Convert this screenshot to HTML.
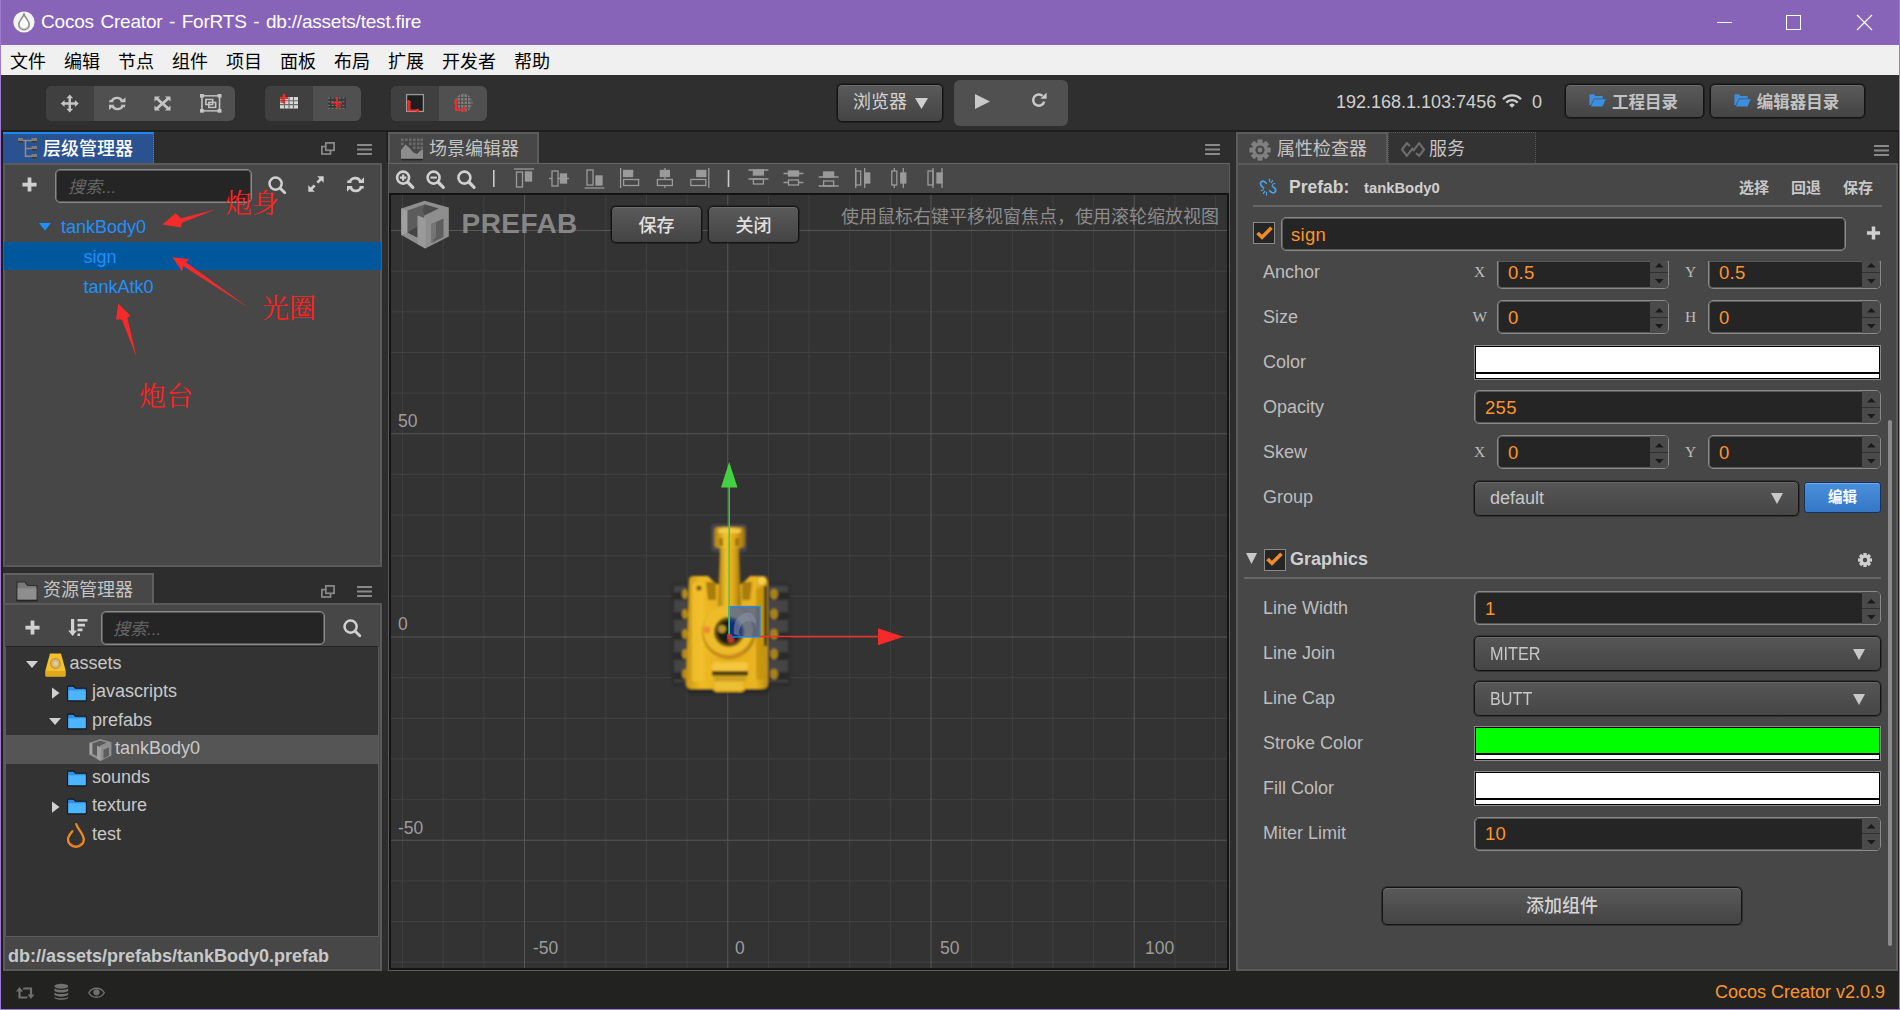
<!DOCTYPE html>
<html lang="zh-CN">
<head>
<meta charset="utf-8">
<title>Cocos Creator - ForRTS - db://assets/test.fire</title>
<style>
*{box-sizing:border-box;margin:0;padding:0}
html,body{width:1900px;height:1010px;overflow:hidden;background:#2f2f2f}
body{position:relative;font-family:"Liberation Sans","Noto Sans CJK SC",sans-serif;color:#bdbdbd;font-size:16px}
.abs{position:absolute}
.cjk{font-family:"Liberation Sans","Noto Sans CJK SC",sans-serif}
svg{position:absolute;overflow:visible}
/* window chrome */
#titlebar{left:0;top:0;width:1900px;height:45px;background:#8764b8}
#title{left:41px;top:8.5px;font-size:19px;color:#fff;white-space:nowrap;letter-spacing:-0.2px;word-spacing:1.5px;line-height:26px}
#menubar{left:1px;top:45px;width:1898px;height:30px;background:#f0f0f0}
.mi{top:4px;font-size:18px;line-height:26px;color:#000;white-space:nowrap}
#winborder{left:0;top:0;width:1900px;height:1010px;border:1px solid #9b7ad0;border-top:none;pointer-events:none;z-index:50}
/* toolbar */
.tgroup{background:#505050;border-radius:6px;overflow:hidden}
.tbtn{top:0;height:100%;}
.tbtn.on{background:#404040}
/* tabs & panels */
.tab{height:31px;background:#474747;border:2px solid #5c5c5c;border-bottom:none;color:#c8c8c8;font-size:18px;line-height:30px;white-space:nowrap}
.panel{background:#474747;border:2px solid #5a5a5a}
.lbl{font-size:17px;color:#bdbdbd;white-space:nowrap;line-height:22px}
.inp{background:#252525;border:1px solid #8a8a8a;border-radius:5px;box-shadow:inset 0 0 0 1px rgba(140,140,140,.5)}
.val{font-size:18.5px;letter-spacing:.3px;color:#fd942b;white-space:nowrap;line-height:22px}
.sel{background:linear-gradient(#565656,#464646);border:1px solid #161616;border-radius:5px;box-shadow:inset 0 1px 0 #686868,0 0 0 1px rgba(10,10,10,.35)}
.btn{background:linear-gradient(#5a5a5a,#444);border:1px solid #141414;border-radius:5px;box-shadow:inset 0 1px 0 #6c6c6c,0 0 0 1px rgba(10,10,10,.35);color:#d0d0d0;text-align:center;white-space:nowrap}
.mono{font-family:"Liberation Serif",serif;font-size:15.5px;color:#bdbdbd;line-height:18px;width:14px;text-align:center}
.tree{font-size:17px;white-space:nowrap;line-height:22px}
.red{font-family:"Noto Serif CJK SC","Liberation Serif",serif;color:#f22;font-size:27px;line-height:32px;white-space:nowrap}
</style>
</head>
<body>
<!-- TITLE BAR -->
<div id="titlebar" class="abs"></div>
<div id="title" class="abs">Cocos Creator - ForRTS - db://assets/test.fire</div>
<svg style="left:13px;top:11px;width:22px;height:22px" viewBox="0 0 22 22"><circle cx="11" cy="11" r="10.6" fill="#f4f4f4"/><path d="M11 3.2C12.4 7 16.2 9.6 16.2 13.6A5.2 5.2 0 0 1 5.8 13.6C5.8 9.6 9.6 7 11 3.2Z" fill="#fff" stroke="#8e8e8e" stroke-width="1.6"/><path d="M7.4 15.5A4 4 0 0 0 14.6 15.5" fill="none" stroke="#c8c8c8" stroke-width="1.2"/></svg>
<svg style="left:1716px;top:14px;width:160px;height:18px" viewBox="1716 14 160 18" shape-rendering="crispEdges"><path d="M1717 22.5H1732" stroke="#fff" stroke-width="1"/><rect x="1786.5" y="15.5" width="14" height="14" fill="none" stroke="#fff" stroke-width="1"/><path d="M1857 15 1872 30M1872 15 1857 30" stroke="#fff" stroke-width="1.2" shape-rendering="geometricPrecision"/></svg>
<div id="menubar" class="abs cjk">
<span class="abs mi" style="left:9px">文件</span>
<span class="abs mi" style="left:63px">编辑</span>
<span class="abs mi" style="left:117px">节点</span>
<span class="abs mi" style="left:171px">组件</span>
<span class="abs mi" style="left:225px">项目</span>
<span class="abs mi" style="left:279px">面板</span>
<span class="abs mi" style="left:333px">布局</span>
<span class="abs mi" style="left:387px">扩展</span>
<span class="abs mi" style="left:441px">开发者</span>
<span class="abs mi" style="left:513px">帮助</span>
</div>
<!-- MAIN -->
<div id="main" class="abs" style="left:0;top:75px;width:1900px;height:895px;background:#2f2f2f"></div>
<div class="abs" style="left:0;top:130px;width:1900px;height:841px;background:#1f1e1c"></div><div class="abs" style="left:3px;top:132px;width:1895px;height:839px;background:#2d2d2d"></div><div id="status" class="abs" style="left:0;top:971px;width:1900px;height:39px;background:#222220"></div>
<!-- TOOLBAR -->
<div class="abs tgroup" style="left:46px;top:86px;width:189px;height:35px;color:#c4c4c4;fill:#c4c4c4">
 <div class="abs tbtn on" style="left:0;width:48px"></div>
 <svg style="left:14px;top:7.5px;width:19.5px;height:19px" viewBox="0 0 20 20"><path d="M10 0.5 13.6 4.6H11.3V8.7H15.4V6.4L19.5 10 15.4 13.6V11.3H11.3V15.4H13.6L10 19.5 6.4 15.4H8.7V11.3H4.6V13.6L0.5 10 4.6 6.4V8.7H8.7V4.6H6.4Z"/></svg>
 <svg style="left:62.5px;top:10px;width:16.5px;height:15px" viewBox="0 0 16 16" preserveAspectRatio="none"><path d="M13.9 9.3h2.0L15.3 12.4 14.2 11.5A6.6 6.6 0 0 1 2.2 11.2L4.6 10.1A4 4 0 0 0 12.2 9.9L11 9.3ZM2.1 6.7H0.1L0.7 3.6 1.8 4.5A6.6 6.6 0 0 1 13.8 4.8L11.4 5.9A4 4 0 0 0 3.8 6.1L5 6.7Z"/><path d="M16 1.2V6.6H10.6ZM0 14.8V9.4H5.4Z"/></svg>
 <svg style="left:108px;top:10px;width:17px;height:15px" viewBox="0 0 18 18" preserveAspectRatio="none"><path d="M0.5 0.5H6.5L4.6 2.4 9 6.8 13.4 2.4 11.5 0.5H17.5V6.5L15.6 4.6 11.2 9 15.6 13.4 17.5 11.5V17.5H11.5L13.4 15.6 9 11.2 4.6 15.6 6.5 17.5H0.5V11.5L2.4 13.4 6.8 9 2.4 4.6 0.5 6.5Z"/></svg>
 <svg style="left:153.5px;top:8.3px;width:21.5px;height:18.7px" viewBox="0 0 22 20.5" preserveAspectRatio="none"><g fill="none" stroke="currentColor" stroke-width="1.6"><rect x="2" y="2" width="18" height="16.5"/><rect x="6" y="6" width="7" height="5.5"/><rect x="9" y="9.2" width="7" height="5.5"/></g><g stroke="none"><rect x="0" y="0" width="4" height="4"/><rect x="18" y="0" width="4" height="4"/><rect x="0" y="16.5" width="4" height="4"/><rect x="18" y="16.5" width="4" height="4"/></g></svg>
</div>
<div class="abs tgroup" style="left:265px;top:86px;width:96px;height:35px">
 <div class="abs tbtn on" style="left:0;width:48px"></div>
 <svg style="left:0;top:0;width:96px;height:35px" viewBox="0 0 96 35">
  <rect x="15" y="11" width="18" height="11.5" fill="#d8d8d8"/>
  <g stroke="#6a6a6a" stroke-width="1.1"><path d="M19.5 11V22.5M24 11V22.5M28.5 11V22.5M15 14.8H33M15 18.6H33"/></g>
  <path d="M19 8V17.5M15 12H23" stroke="#f52b2b" stroke-width="2.2"/>
  <rect x="15.5" y="12.5" width="3" height="4.5" fill="#b03030" opacity=".7"/>
  <rect x="63" y="11.2" width="18" height="11.3" fill="#3a3a3a"/>
  <g stroke="#6e6e6e" stroke-width="1.3" stroke-dasharray="2 1.6"><path d="M63 12H81M63 15.7H81M63 19.3H81M63 22.3H81"/></g>
  <path d="M72 11V22.5M66 16.8H77" stroke="#f52b2b" stroke-width="1.6"/>
  <rect x="72.8" y="17.6" width="3.5" height="4" fill="#a83232"/>
 </svg>
</div>
<div class="abs tgroup" style="left:391px;top:86px;width:96px;height:35px">
 <div class="abs tbtn on" style="left:0;width:48px"></div>
 <svg style="left:0;top:0;width:96px;height:35px" viewBox="0 0 96 35">
  <rect x="15.6" y="8.6" width="16.8" height="16.8" fill="#1e1e1e" stroke="#9a9a9a" stroke-width="1.3"/>
  <rect x="16.3" y="15" width="3.4" height="9" fill="#b53030"/>
  <path d="M17.6 14V24.4H27" stroke="#f52b2b" stroke-width="1.8" fill="none"/>
  <circle cx="26.6" cy="24.4" r="1.7" fill="#f52b2b"/><rect x="16" y="15.4" width="3.6" height="1.4" fill="#f52b2b"/>
  <circle cx="72.5" cy="16.8" r="9" fill="#7d7d7d"/>
  <g stroke="#505050" stroke-width="1"><path d="M66 9V25M69.5 8V26M73 8V26M76.5 8V26M80 10V24M64 11.5H81M64 15H82M64 18.5H82M64 22H81"/></g>
  <rect x="63.6" y="15" width="3.4" height="9" fill="#b53030"/>
  <path d="M65 13V24H75" stroke="#f52b2b" stroke-width="1.8" fill="none"/>
  <rect x="63.4" y="14" width="3.6" height="1.4" fill="#f52b2b"/><rect x="72.6" y="20.5" width="1.6" height="5" fill="#f52b2b"/>
 </svg>
</div>
<!-- preview -->
<div class="abs btn cjk" style="left:837px;top:84px;width:106px;height:38px;font-size:18px;line-height:35px;text-align:left;padding-left:15px;color:#d2d2d2">浏览器</div>
<svg style="left:915px;top:98px;width:13px;height:11px;fill:#cfcfcf" viewBox="0 0 12 8" preserveAspectRatio="none"><path d="M0 0H12L6 8Z"/></svg>
<div class="abs tgroup" style="left:954px;top:80px;width:114px;height:46px"></div>
<svg style="left:975px;top:93.5px;width:15px;height:15px" viewBox="0 0 15 15"><path d="M0 0V15L15 7.5Z" fill="#c8c8c8"/></svg>
<svg style="left:1031px;top:92px;width:16px;height:16px" viewBox="0 0 16 16"><path d="M13.2 9.6A5.6 5.6 0 1 1 11.6 3.9" fill="none" stroke="#c8c8c8" stroke-width="2.5"/><path d="M15.6 0.6V6.8H9.4Z" fill="#c8c8c8"/></svg>
<div class="abs" style="left:1336px;top:91px;font-size:18px;line-height:22px;color:#cfcfcf;white-space:nowrap">192.168.1.103:7456</div>
<svg style="left:1502px;top:94px;width:20px;height:14px" viewBox="0 0 20 14"><g fill="none" stroke="#cfcfcf" stroke-width="2.3"><path d="M1 5.2A12.6 12.6 0 0 1 19 5.2"/><path d="M4.3 8.6A8 8 0 0 1 15.7 8.6"/></g><path d="M10 13.8 7.2 10.9A4 4 0 0 1 12.8 10.9Z" fill="#cfcfcf"/></svg>
<div class="abs" style="left:1532px;top:91px;font-size:18px;line-height:22px;color:#cfcfcf">0</div>
<div class="abs btn cjk" style="left:1565px;top:84px;width:139px;height:34px;font-size:16.5px;line-height:34px;font-weight:bold;padding-left:21px;color:#c2c2c2">工程目录</div>
<svg style="left:1589px;top:93.5px;width:17px;height:13px" viewBox="0 0 20 16"><path d="M0 1.5Q0 0.3 1.2 0.3H5.6L7.4 2.4H15.4Q16.6 2.4 16.6 3.6V5.5H5.6L1.8 13.5 0 13.5Z" fill="#3c8fde"/><path d="M5.9 6.6H20L16.2 15.4H1.9Z" fill="#3c8fde"/></svg>
<div class="abs btn cjk" style="left:1710px;top:84px;width:155px;height:34px;font-size:16.5px;line-height:34px;font-weight:bold;padding-left:21px;color:#c2c2c2">编辑器目录</div>
<svg style="left:1734px;top:93.5px;width:17px;height:13px" viewBox="0 0 20 16"><path d="M0 1.5Q0 0.3 1.2 0.3H5.6L7.4 2.4H15.4Q16.6 2.4 16.6 3.6V5.5H5.6L1.8 13.5 0 13.5Z" fill="#3c8fde"/><path d="M5.9 6.6H20L16.2 15.4H1.9Z" fill="#3c8fde"/></svg>
<!--/TOOLBAR-->

<!-- LEFT: HIERARCHY -->
<div class="abs" style="left:3px;top:132px;width:151px;height:31px;background:#2a5291;border-top:2px solid #1c8af2;border-right:1px dotted #3f7fd0"></div>
<svg style="left:18px;top:138px;width:19px;height:21px" viewBox="0 0 19 21"><path d="M3 2.5H16M7.5 2.5V18.3H16M7.5 10.4H16" fill="none" stroke="#8c8c8c" stroke-width="1.5"/><g fill="#7d7d7d"><rect x="0" y="0" width="5" height="4.6"/><rect x="13.5" y="0" width="5.5" height="4.6"/><rect x="13.5" y="8" width="5.5" height="4.6"/><rect x="13.5" y="16" width="5.5" height="4.6"/></g><g fill="#2b2b2b"><rect x="0" y="3.2" width="5" height="1.4"/><rect x="13.5" y="3.2" width="5.5" height="1.4"/><rect x="13.5" y="11.2" width="5.5" height="1.4"/><rect x="13.5" y="19.2" width="5.5" height="1.4"/></g></svg>
<div class="abs cjk" style="left:43px;top:136px;font-size:18px;line-height:27px;color:#fff;white-space:nowrap;font-weight:500">层级管理器</div>
<svg style="left:321px;top:142px;width:14px;height:13px;color:#8a8a8a" viewBox="0 0 14 13"><g fill="none" stroke="currentColor" stroke-width="1.7"><rect x="0.9" y="4.6" width="8.6" height="7.4"/><rect x="4.8" y="0.9" width="8.3" height="7.4" fill="#303030"/></g></svg>
<svg style="left:357px;top:142.5px;width:15px;height:13px;fill:#8a8a8a" viewBox="0 0 16 14"><path d="M0 1h16v2.2H0ZM0 5.9h16v2.2H0ZM0 10.8h16v2.2H0Z"/></svg>
<div class="abs panel" style="left:3px;top:163px;width:379px;height:404px"></div>
<svg style="left:22px;top:177px;width:15px;height:15px;fill:#d0d0d0" viewBox="0 0 16 16"><path d="M6 0.5h4v5.5h5.5v4H10v5.5H6V10H0.5V6H6Z"/></svg>
<div class="abs inp" style="left:55px;top:169px;width:197px;height:34px"></div>
<div class="abs cjk" style="left:68px;top:175.5px;font-size:17px;line-height:24px;color:#666;font-style:italic;white-space:nowrap">搜索...</div>
<svg style="left:268px;top:176px;width:18px;height:18px;color:#d0d0d0" viewBox="0 0 18 18"><circle cx="7.6" cy="7.6" r="6.1" fill="none" stroke="currentColor" stroke-width="2.5"/><path d="M12.2 12.2 16.8 16.8" stroke="currentColor" stroke-width="2.8" stroke-linecap="round"/></svg>
<svg style="left:308px;top:176px;width:16px;height:16px" viewBox="0 0 16 16"><path d="M9.2 0.3H15.7V6.8L13.4 4.5 10.3 7.6 8.4 5.7 11.5 2.6ZM6.8 15.7H0.3V9.2L2.6 11.5 5.7 8.4 7.6 10.3 4.5 13.4Z" fill="#d0d0d0"/></svg>
<svg style="left:346.5px;top:176px;width:17px;height:17px;fill:#d0d0d0" viewBox="0 0 16 16" preserveAspectRatio="none"><path d="M13.9 9.3h2.0L15.3 12.4 14.2 11.5A6.6 6.6 0 0 1 2.2 11.2L4.6 10.1A4 4 0 0 0 12.2 9.9L11 9.3ZM2.1 6.7H0.1L0.7 3.6 1.8 4.5A6.6 6.6 0 0 1 13.8 4.8L11.4 5.9A4 4 0 0 0 3.8 6.1L5 6.7Z"/><path d="M16 1.2V6.6H10.6ZM0 14.8V9.4H5.4Z"/></svg>
<!-- rows -->
<svg style="left:39px;top:223px;width:12px;height:7.5px;fill:#1e90ff" viewBox="0 0 12 8" preserveAspectRatio="none"><path d="M0 0H12L6 8Z"/></svg>
<div class="abs tree" style="left:61px;top:216px;color:#1e90ff;font-size:18px">tankBody0</div>
<div class="abs" style="left:4px;top:242px;width:377px;height:28px;background:#01579b"></div>
<div class="abs tree" style="left:83.5px;top:246px;color:#1e90ff;font-size:18px">sign</div>
<div class="abs tree" style="left:83.5px;top:276px;color:#1e90ff;font-size:18px">tankAtk0</div>
<!-- annotations -->
<div class="abs red" style="left:225px;top:186px">炮身</div>
<div class="abs red" style="left:262px;top:291px">光圈</div>
<div class="abs red" style="left:139px;top:379px">炮台</div>
<svg style="left:0;top:0;width:400px;height:420px" viewBox="0 0 400 420"><g fill="#f52b2b">
<path d="M162.3 224.4 175.6 213.3 180.8 218.2 215.5 209.5 182 222.8 180.8 227.6Z"/>
<path d="M172.5 257.2 189.5 259.3 186 262.3 249 308 183.5 266.2 182 271.5Z"/>
<path d="M118.3 303.6 130.6 316 127.3 317.6 136.6 357.5 121.8 319.6 116 319.4Z"/>
</g></svg>
<!-- LEFT: ASSETS -->
<div class="abs tab cjk" style="left:3px;top:573px;width:151px;border-color:#606060"></div>
<svg style="left:15px;top:580px;width:24px;height:22px" viewBox="0 0 24 22"><path d="M2 2H10L12.5 5.5H22V20H2Z" fill="#7a7a7a" stroke="#2c2c2c" stroke-width="1.2"/><path d="M2.6 8.3H21.4V19.4H2.6Z" fill="#8e8e8e"/><path d="M1.4 20.8H22.6" stroke="#222" stroke-width="1.4"/></svg>
<div class="abs cjk" style="left:43px;top:577px;font-size:18px;line-height:27px;color:#c4c4c4;white-space:nowrap">资源管理器</div>
<svg style="left:321px;top:584.5px;width:14px;height:13px;color:#8a8a8a" viewBox="0 0 14 13"><g fill="none" stroke="currentColor" stroke-width="1.7"><rect x="0.9" y="4.6" width="8.6" height="7.4"/><rect x="4.8" y="0.9" width="8.3" height="7.4" fill="#303030"/></g></svg>
<svg style="left:357px;top:585px;width:15px;height:13px;fill:#8a8a8a" viewBox="0 0 16 14"><path d="M0 1h16v2.2H0ZM0 5.9h16v2.2H0ZM0 10.8h16v2.2H0Z"/></svg>
<div class="abs panel" style="left:3px;top:603px;width:379px;height:368px"></div>
<svg style="left:25px;top:620px;width:15px;height:15px;fill:#d0d0d0" viewBox="0 0 16 16"><path d="M6 0.5h4v5.5h5.5v4H10v5.5H6V10H0.5V6H6Z"/></svg>
<svg style="left:68px;top:618px;width:20px;height:19px" viewBox="0 0 20 19"><path d="M3 1H6.2V12.5H9L4.6 18 0.2 12.5H3Z" fill="#d0d0d0"/><path d="M9.5 1H19.5V3.6H9.5ZM9.5 5.8H17V8.4H9.5ZM9.5 10.6H14.5V13.2H9.5ZM9.5 15.4H12V18H9.5Z" fill="#d0d0d0"/></svg>
<div class="abs inp" style="left:101px;top:611px;width:224px;height:34px"></div>
<div class="abs cjk" style="left:113px;top:617.5px;font-size:17px;line-height:24px;color:#666;font-style:italic;white-space:nowrap">搜索...</div>
<svg style="left:342.5px;top:619px;width:18px;height:18px;color:#d0d0d0" viewBox="0 0 18 18"><circle cx="7.6" cy="7.6" r="6.1" fill="none" stroke="currentColor" stroke-width="2.5"/><path d="M12.2 12.2 16.8 16.8" stroke="currentColor" stroke-width="2.8" stroke-linecap="round"/></svg>
<div class="abs" style="left:5px;top:646px;width:374px;height:291px;background:#333;border:1px solid #5c5c5c;border-top-color:#222"></div>
<div class="abs" style="left:6px;top:735px;width:372px;height:29px;background:#555"></div>
<!-- tree rows -->
<svg style="left:26px;top:660.5px;width:12px;height:7px;fill:#d0d0d0" viewBox="0 0 12 8" preserveAspectRatio="none"><path d="M0 0H12L6 8Z"/></svg>
<svg style="left:45px;top:652.5px;width:21px;height:24px" viewBox="0 0 21 24"><path d="M5 0.5H16L20.5 17V22.5Q20.5 23.5 19.5 23.5H1.5Q0.5 23.5 0.5 22.5V17Z" fill="#f1c22e"/><path d="M0.5 18H20.5V22.5Q20.5 23.5 19.5 23.5H1.5Q0.5 23.5 0.5 22.5Z" fill="#e0a81c"/><circle cx="10.5" cy="10.5" r="4.8" fill="#d9b978" stroke="#c98d3c" stroke-width="1.2"/><circle cx="10.5" cy="10.5" r="2" fill="#e6cf9c"/></svg>
<div class="abs tree" style="left:69.5px;top:651.5px;color:#c8c8c8;font-size:18px">assets</div>
<svg style="left:51.5px;top:687px;width:7.5px;height:12px;fill:#d0d0d0" viewBox="0 0 8 12"><path d="M0 0V12L8 6Z"/></svg>
<svg style="left:67px;top:684.5px;width:20px;height:17px" viewBox="0 0 20 16"><path d="M0.6 1.6Q0.6 0.6 1.6 0.6H6.6L8.4 2.8H18.4Q19.4 2.8 19.4 3.8V14.4Q19.4 15.4 18.4 15.4H1.6Q0.6 15.4 0.6 14.4Z" fill="#2f8fe6" stroke="#151515" stroke-width="1.1"/><path d="M1.4 4.8H18.6V14.6H1.4Z" fill="#4db4ff"/></svg>
<div class="abs tree" style="left:92px;top:680px;color:#c8c8c8;font-size:18px">javascripts</div>
<svg style="left:48.5px;top:718px;width:12px;height:7px;fill:#d0d0d0" viewBox="0 0 12 8" preserveAspectRatio="none"><path d="M0 0H12L6 8Z"/></svg>
<svg style="left:67px;top:713px;width:20px;height:17px" viewBox="0 0 20 16"><path d="M0.6 1.6Q0.6 0.6 1.6 0.6H6.6L8.4 2.8H18.4Q19.4 2.8 19.4 3.8V14.4Q19.4 15.4 18.4 15.4H1.6Q0.6 15.4 0.6 14.4Z" fill="#2f8fe6" stroke="#151515" stroke-width="1.1"/><path d="M1.4 4.8H18.6V14.6H1.4Z" fill="#4db4ff"/></svg>
<div class="abs tree" style="left:92px;top:708.5px;color:#c8c8c8;font-size:18px">prefabs</div>
<svg style="left:89px;top:737.5px;width:23px;height:24px" viewBox="8 3.5 50 50"><path d="M32.6 4.7 56.8 11.6V40.5L33.2 52.6 9.3 38.9V12.6Z" fill="#8e8e8e"/><path d="M9.3 12.6 15.5 15V36.5L9.3 38.9Z" fill="#a6a6a6"/><path d="M15.5 14.6 32.6 8.6 46.5 12.4 32 19.5V36L25.5 41.5 15.5 36.5Z" fill="#5a5a5a"/><path d="M25.5 19.5 33.7 22.6V52.6L25.5 48Z" fill="#a0a0a0"/><path d="M39.5 28 51.5 22.5V41L39.5 47Z" fill="#5e5e5e"/></svg>
<div class="abs tree" style="left:115px;top:737px;color:#c8c8c8;font-size:18px">tankBody0</div>
<svg style="left:67px;top:770px;width:20px;height:17px" viewBox="0 0 20 16"><path d="M0.6 1.6Q0.6 0.6 1.6 0.6H6.6L8.4 2.8H18.4Q19.4 2.8 19.4 3.8V14.4Q19.4 15.4 18.4 15.4H1.6Q0.6 15.4 0.6 14.4Z" fill="#2f8fe6" stroke="#151515" stroke-width="1.1"/><path d="M1.4 4.8H18.6V14.6H1.4Z" fill="#4db4ff"/></svg>
<div class="abs tree" style="left:92px;top:765.5px;color:#c8c8c8;font-size:18px">sounds</div>
<svg style="left:51.5px;top:801px;width:7.5px;height:12px;fill:#d0d0d0" viewBox="0 0 8 12"><path d="M0 0V12L8 6Z"/></svg>
<svg style="left:67px;top:798px;width:20px;height:17px" viewBox="0 0 20 16"><path d="M0.6 1.6Q0.6 0.6 1.6 0.6H6.6L8.4 2.8H18.4Q19.4 2.8 19.4 3.8V14.4Q19.4 15.4 18.4 15.4H1.6Q0.6 15.4 0.6 14.4Z" fill="#2f8fe6" stroke="#151515" stroke-width="1.1"/><path d="M1.4 4.8H18.6V14.6H1.4Z" fill="#4db4ff"/></svg>
<div class="abs tree" style="left:92px;top:793.5px;color:#c8c8c8;font-size:18px">texture</div>
<svg style="left:66px;top:823px;width:20px;height:25px" viewBox="0 0 20 25"><path d="M10.3 1.2C11.5 6 17.8 10.8 17.8 16.6A7.9 7.3 0 0 1 2 16.6C2 13 4.6 10.4 6.3 8.2" fill="none" stroke="#f08a24" stroke-width="2.3" stroke-linecap="round"/><path d="M4.3 20.6A7 6.4 0 0 0 15.6 20.6" fill="none" stroke="#e8761c" stroke-width="1.6"/></svg>
<div class="abs tree" style="left:92px;top:822.5px;color:#c8c8c8;font-size:18px">test</div>
<div class="abs" style="left:8px;top:945px;font-size:18px;line-height:22px;font-weight:bold;color:#c8c8c8;white-space:nowrap">db://assets/prefabs/tankBody0.prefab</div>
<!--/LEFT-->

<!-- CENTER: SCENE -->
<div class="abs tab cjk" style="left:388px;top:132px;width:151px;box-shadow:-1.5px -1px 0 #1e1e1e"></div>
<svg style="left:401px;top:138px;width:22px;height:23px" viewBox="0 0 22 23"><g fill="#6a6a6a"><rect x="0" y="0.5" width="2.6" height="2.6"/><rect x="4" y="0.5" width="2.6" height="2.6"/><rect x="8" y="0.5" width="2.6" height="2.6"/><rect x="12" y="0.5" width="2.6" height="2.6"/><rect x="16" y="0.5" width="2.6" height="2.6"/><rect x="19.4" y="0.5" width="2.6" height="2.6"/><rect x="0" y="4.5" width="2.6" height="2.6"/><rect x="8" y="4.5" width="2.6" height="2.6"/><rect x="12" y="4.5" width="2.6" height="2.6"/><rect x="16" y="4.5" width="2.6" height="2.6"/><rect x="19.4" y="4.5" width="2.6" height="2.6"/><rect x="12" y="8.5" width="2.6" height="2.6"/><rect x="16" y="8.5" width="2.6" height="2.6"/><rect x="19.4" y="8.5" width="2.6" height="2.6"/></g><path d="M0 12 4.5 6.5 8 9.5 12.5 14.5 16 16 19 13 22 11V21H0Z" fill="#8c8c8c"/><path d="M0 21.6H22" stroke="#262626" stroke-width="1.6"/></svg>
<div class="abs cjk" style="left:429px;top:136px;font-size:18px;line-height:27px;color:#c4c4c4;white-space:nowrap">场景编辑器</div>
<svg style="left:1205px;top:143px;width:15px;height:13px;fill:#8a8a8a" viewBox="0 0 16 14"><path d="M0 1h16v2.2H0ZM0 5.9h16v2.2H0ZM0 10.8h16v2.2H0Z"/></svg>
<div class="abs" style="left:388px;top:163px;width:842px;height:808px;background:#484848;border:1px solid #5c5c5c;border-top:1px solid #666"></div>
<svg style="left:388px;top:163px;width:842px;height:31px" viewBox="388 163 842 31">
<g transform="translate(395.5,170)" fill="none" stroke="#d0d0d0"><circle cx="7.6" cy="7.6" r="6" stroke-width="2.6"/><path d="M12 12 17.3 17.3" stroke-width="3.2" stroke-linecap="round"/><path d="M4.4 7.6H10.8M7.6 4.4V10.8" stroke-width="2.1"/></g><g transform="translate(426.0,170)" fill="none" stroke="#d0d0d0"><circle cx="7.6" cy="7.6" r="6" stroke-width="2.6"/><path d="M12 12 17.3 17.3" stroke-width="3.2" stroke-linecap="round"/><path d="M4.4 7.6H10.8" stroke-width="2.1"/></g><g transform="translate(456.8,170)" fill="none" stroke="#d0d0d0"><circle cx="7.6" cy="7.6" r="6" stroke-width="2.6"/><path d="M12 12 17.3 17.3" stroke-width="3.2" stroke-linecap="round"/></g>
<path d="M493.8 170V187M728.5 170V187" stroke="#c8c8c8" stroke-width="1.6"/>
<g transform="translate(514,168)" fill="none" stroke="#9a9a9a" stroke-width="1.3"><path d="M0 1H20"/><rect x="2.5" y="4" width="6" height="15"/><rect x="11.5" y="4" width="6" height="9" fill="#9a9a9a"/></g>
<g transform="translate(549,168)" fill="none" stroke="#9a9a9a" stroke-width="1.3"><path d="M0 10.5H20"/><rect x="3" y="3" width="6" height="15" fill="#484848"/><rect x="11.5" y="6" width="6" height="9" fill="#9a9a9a"/></g>
<g transform="translate(584.5,168)" fill="none" stroke="#9a9a9a" stroke-width="1.3"><path d="M0 20H20"/><rect x="2.5" y="2" width="6" height="15"/><rect x="11.5" y="8" width="6" height="9" fill="#9a9a9a"/></g>
<g transform="translate(619.6,168)" fill="none" stroke="#9a9a9a" stroke-width="1.3"><path d="M1 0V20"/><rect x="4" y="2.5" width="9" height="6" fill="#9a9a9a"/><rect x="4" y="11.5" width="15" height="6"/></g>
<g transform="translate(654.4,168)" fill="none" stroke="#9a9a9a" stroke-width="1.3"><path d="M10.5 0V20"/><rect x="6" y="2.5" width="9" height="6" fill="#9a9a9a"/><rect x="3" y="11.5" width="15" height="6" fill="#484848"/></g>
<g transform="translate(689.8,168)" fill="none" stroke="#9a9a9a" stroke-width="1.3"><path d="M19 0V20"/><rect x="7" y="2.5" width="9" height="6" fill="#9a9a9a"/><rect x="1" y="11.5" width="15" height="6"/></g>
<g transform="translate(748.4,168)" fill="none" stroke="#9a9a9a" stroke-width="1.3"><path d="M0 2H20M0 11H20"/><rect x="5" y="2" width="10" height="5" fill="#9a9a9a"/><rect x="5" y="11" width="10" height="5"/></g>
<g transform="translate(783.5,168)" fill="none" stroke="#9a9a9a" stroke-width="1.3"><path d="M0 5.5H20M0 14.5H20"/><rect x="5" y="3" width="10" height="5" fill="#9a9a9a"/><rect x="5" y="12" width="10" height="5" fill="#484848"/></g>
<g transform="translate(818.6,168)" fill="none" stroke="#9a9a9a" stroke-width="1.3"><path d="M0 9H20M0 18H20"/><rect x="5" y="4" width="10" height="5" fill="#9a9a9a"/><rect x="5" y="13" width="10" height="5"/></g>
<g transform="translate(853.7,168)" fill="none" stroke="#9a9a9a" stroke-width="1.3"><path d="M2 0V20M11 0V20"/><rect x="2" y="3" width="5" height="14"/><rect x="11" y="5" width="5" height="10" fill="#9a9a9a"/></g>
<g transform="translate(888.8,168)" fill="none" stroke="#9a9a9a" stroke-width="1.3"><path d="M5.5 0V20M14.5 0V20"/><rect x="3" y="3" width="5" height="14" fill="#484848"/><rect x="12" y="5" width="5" height="10" fill="#9a9a9a"/></g>
<g transform="translate(924,168)" fill="none" stroke="#9a9a9a" stroke-width="1.3"><path d="M9 0V20M18 0V20"/><rect x="4" y="3" width="5" height="14"/><rect x="13" y="5" width="5" height="10" fill="#9a9a9a"/></g>
</svg>
<div class="abs" style="left:389px;top:193px;width:840px;height:777px;background:#333;border:2px solid #141414;overflow:hidden">
<svg style="left:0;top:0;width:836px;height:773px" viewBox="391 195 836 773"><path d="M402.55 195V968M443.20 195V968M483.85 195V968M565.15 195V968M605.80 195V968M646.45 195V968M687.10 195V968M768.40 195V968M809.05 195V968M849.70 195V968M890.35 195V968M971.65 195V968M1012.30 195V968M1052.95 195V968M1093.60 195V968M1174.90 195V968M1215.55 195V968M391 271.15H1227M391 311.80H1227M391 352.45H1227M391 393.10H1227M391 474.40H1227M391 515.05H1227M391 555.70H1227M391 596.35H1227M391 677.65H1227M391 718.30H1227M391 758.95H1227M391 799.60H1227M391 880.90H1227M391 921.55H1227M391 962.20H1227" stroke="#414141" stroke-width="1" fill="none"/><path d="M524.50 195V968M727.75 195V968M931.00 195V968M1134.25 195V968M391 230.50H1227M391 433.75H1227M391 637.00H1227M391 840.25H1227" stroke="#565656" stroke-width="1" fill="none"/></svg></div>
<div class="abs" style="left:398px;top:410px;font-size:17.5px;line-height:22px;color:#9c9c9c;white-space:nowrap">50</div><div class="abs" style="left:398px;top:613px;font-size:17.5px;line-height:22px;color:#9c9c9c;white-space:nowrap">0</div><div class="abs" style="left:398px;top:817px;font-size:17.5px;line-height:22px;color:#9c9c9c;white-space:nowrap">-50</div>
<div class="abs" style="left:533px;top:937px;font-size:17.5px;line-height:22px;color:#9c9c9c;white-space:nowrap">-50</div><div class="abs" style="left:735px;top:937px;font-size:17.5px;line-height:22px;color:#9c9c9c;white-space:nowrap">0</div><div class="abs" style="left:940px;top:937px;font-size:17.5px;line-height:22px;color:#9c9c9c;white-space:nowrap">50</div><div class="abs" style="left:1145px;top:937px;font-size:17.5px;line-height:22px;color:#9c9c9c;white-space:nowrap">100</div>
<svg style="left:392px;top:196px;width:66px;height:58px" viewBox="0 0 66 58"><path d="M32.6 4.7 56.8 11.6V40.5L33.2 52.6 9.3 38.9V12.6Z" fill="#8e8e8e"/><path d="M9.3 12.6 15.5 15V36.5L9.3 38.9Z" fill="#a0a0a0"/><path d="M15.5 14.6 32.6 8.6 46.5 12.4 32 19.5V36L25.5 41.5 15.5 36.5Z" fill="#5c5c5c"/><path d="M32.6 8.6 46.5 12.4 32 19.5 31 14Z" fill="#4c4c4c"/><path d="M15.5 36.5 25.5 30.5V41.5Z" fill="#454545"/><path d="M25.5 19.5 33.7 22.6V52.6L25.5 48Z" fill="#9a9a9a"/><path d="M39.5 28 51.5 22.5V41L39.5 47Z" fill="#5e5e5e"/><path d="M39.5 28 44 26V40.5L39.5 47Z" fill="#757575"/></svg>
<div class="abs" style="left:461.5px;top:207px;font-size:28px;line-height:34px;font-weight:bold;color:#868686;letter-spacing:0.45px;white-space:nowrap">PREFAB</div>
<div class="abs btn cjk" style="left:611px;top:206px;width:91px;height:37px;font-size:18px;line-height:39px;font-weight:500;color:#e0e0e0">保存</div>
<div class="abs btn cjk" style="left:708px;top:206px;width:91px;height:37px;font-size:18px;line-height:39px;font-weight:500;color:#e0e0e0">关闭</div>
<div class="abs cjk" style="left:841px;top:203.5px;font-size:18px;line-height:27px;color:#8c8c8c;white-space:nowrap">使用鼠标右键平移视窗焦点，使用滚轮缩放视图</div>
<!--TANK-->
<svg style="left:660px;top:450px;width:260px;height:260px" viewBox="660 450 260 260">
<defs><filter id="tb" x="-10%" y="-10%" width="120%" height="120%"><feGaussianBlur stdDeviation="0.9"/></filter><linearGradient id="gold" x1="0" x2="1"><stop offset="0" stop-color="#c99512"/><stop offset=".18" stop-color="#f0bb25"/><stop offset=".5" stop-color="#e5ad1c"/><stop offset=".85" stop-color="#eab421"/><stop offset="1" stop-color="#b98a10"/></linearGradient><linearGradient id="brl" x1="0" x2="1"><stop offset="0" stop-color="#a87c0e"/><stop offset=".35" stop-color="#f2c12c"/><stop offset=".7" stop-color="#dca618"/><stop offset="1" stop-color="#9a700c"/></linearGradient></defs>
<g filter="url(#tb)">
<rect x="671" y="583" width="120" height="104" rx="6" fill="#262626" opacity=".55"/>
<rect x="686" y="680" width="84" height="14" rx="6" fill="#222" opacity=".7"/>
<rect x="711" y="524" width="36" height="28" rx="4" fill="#555" opacity=".6"/>
<rect x="674" y="586" width="13" height="96" fill="#444"/><rect x="767" y="586" width="21" height="96" fill="#444"/>
<rect x="673" y="592" width="13" height="8" fill="#2c2c2c"/><rect x="769" y="592" width="20" height="8" fill="#2c2c2c"/>
<ellipse cx="774" cy="594" rx="4" ry="5.5" fill="#a5821c"/><ellipse cx="685" cy="594" rx="3" ry="5" fill="#b08a1c"/>
<rect x="673" y="612" width="13" height="8" fill="#2c2c2c"/><rect x="769" y="612" width="20" height="8" fill="#2c2c2c"/>
<ellipse cx="774" cy="614" rx="4" ry="5.5" fill="#a5821c"/><ellipse cx="685" cy="614" rx="3" ry="5" fill="#b08a1c"/>
<rect x="673" y="632" width="13" height="8" fill="#2c2c2c"/><rect x="769" y="632" width="20" height="8" fill="#2c2c2c"/>
<ellipse cx="774" cy="634" rx="4" ry="5.5" fill="#a5821c"/><ellipse cx="685" cy="634" rx="3" ry="5" fill="#b08a1c"/>
<rect x="673" y="652" width="13" height="8" fill="#2c2c2c"/><rect x="769" y="652" width="20" height="8" fill="#2c2c2c"/>
<ellipse cx="774" cy="654" rx="4" ry="5.5" fill="#a5821c"/><ellipse cx="685" cy="654" rx="3" ry="5" fill="#b08a1c"/>
<rect x="673" y="672" width="13" height="8" fill="#2c2c2c"/><rect x="769" y="672" width="20" height="8" fill="#2c2c2c"/>
<ellipse cx="774" cy="674" rx="4" ry="5.5" fill="#a5821c"/><ellipse cx="685" cy="674" rx="3" ry="5" fill="#b08a1c"/>
<path d="M689 580Q689 576 694 576H708L716 584H742L750 576H764Q769 578 768 584V684Q768 689 762 689H746L742 692H716L712 689H692Q686 689 686 684Z" fill="url(#gold)"/>
<path d="M706 582H716V600H708ZM742 582H752L750 600H742Z" fill="#a87d10"/>
<rect x="692" y="582" width="12" height="100" rx="4" fill="#f2c030" opacity=".8"/>
<rect x="756" y="588" width="8" height="92" rx="3" fill="#c4920f" opacity=".8"/>
<rect x="764" y="586" width="3" height="60" fill="#3a3010"/>
<circle cx="699" cy="588" r="2.6" fill="#7e5d0c"/><circle cx="762" cy="581" r="4" fill="#f6cf4a"/>
<circle cx="729" cy="632" r="27" fill="#b78a12"/><circle cx="728" cy="630" r="25" fill="#eebb2a"/>
<circle cx="729" cy="632" r="15" fill="#6d5510"/><circle cx="729" cy="632" r="12" fill="#1d1a14"/>
<circle cx="722" cy="629" r="4" fill="#b59233"/><circle cx="731" cy="640" r="3" fill="#c43a2a"/><circle cx="707" cy="630" r="3.4" fill="#f08a30"/>
<path d="M716 653Q729 660 744 652" stroke="#e08a20" stroke-width="2" fill="none" opacity=".8"/>
<rect x="712" y="662" width="36" height="9" rx="3.5" fill="#f3c63a"/><rect x="712" y="671" width="36" height="4.5" fill="#4e3c0c"/><rect x="714" y="676" width="32" height="5" fill="#caa020"/><rect x="715" y="682" width="28" height="8" rx="2" fill="#ecc034"/>
<path d="M720 548H739L741 606H718Z" fill="url(#brl)"/>
<rect x="714" y="527" width="31" height="21" rx="4" fill="url(#brl)"/><rect x="718" y="529" width="23" height="4" rx="2" fill="#f4cc48"/>
<rect x="719" y="538" width="4" height="8" fill="#a0760e"/><rect x="735" y="538" width="4" height="8" fill="#a0760e"/>
</g>
<rect x="729" y="606.5" width="31" height="30.5" fill="#0a40c8" fill-opacity=".55" stroke="#1e8cf0" stroke-width="1.3"/>
<path d="M734 634Q732 616 748 612Q756 614 756 624Q748 618 742 624Q738 630 740 636Z" fill="#8a93a8" opacity=".55"/>
<path d="M729.2 636V486" stroke="#44cc44" stroke-width="1.5"/><path d="M729.2 462 737.5 487.5H721Z" fill="#44d044"/>
<path d="M760 636.6H879" stroke="#f03030" stroke-width="1.5"/><path d="M903.5 636.7 878 628.2V645.2Z" fill="#f52b2b"/>
<rect x="727" y="634" width="5" height="5" fill="#d03030" opacity=".8"/>
</svg>
<!--/CENTER-->
<!-- RIGHT: INSPECTOR -->
<div class="abs tab" style="left:1388px;top:132px;width:148px;background:#333;border:1px dotted #585858;border-bottom:none"></div>
<div class="abs tab" style="left:1236px;top:132px;width:152px"></div>
<svg style="left:1249px;top:138.5px;width:22px;height:22px" viewBox="-11 -11 22 22"><g fill="#808080"><rect x="-2.5" y="-10.6" width="5" height="6" transform="rotate(0)"/><rect x="-2.5" y="-10.6" width="5" height="6" transform="rotate(45)"/><rect x="-2.5" y="-10.6" width="5" height="6" transform="rotate(90)"/><rect x="-2.5" y="-10.6" width="5" height="6" transform="rotate(135)"/><rect x="-2.5" y="-10.6" width="5" height="6" transform="rotate(180)"/><rect x="-2.5" y="-10.6" width="5" height="6" transform="rotate(225)"/><rect x="-2.5" y="-10.6" width="5" height="6" transform="rotate(270)"/><rect x="-2.5" y="-10.6" width="5" height="6" transform="rotate(315)"/><circle r="7.8"/></g><circle r="4.6" fill="#474747"/><circle r="2.4" fill="#808080"/></svg>
<div class="abs cjk" style="left:1277px;top:136px;font-size:18px;line-height:27px;color:#c4c4c4;white-space:nowrap">属性检查器</div>
<svg style="left:1401px;top:141.5px;width:24px;height:15px" viewBox="0 0 24 15"><path d="M9 4 5.8 1.2 1 7.5 5.8 13.8 12 5.8M15 11 18.2 13.8 23 7.5 18.2 1.2 12 9.2" fill="none" stroke="#6c6c6c" stroke-width="2.2" stroke-linejoin="round"/></svg>
<div class="abs cjk" style="left:1429px;top:136px;font-size:18px;line-height:27px;color:#c4c4c4;white-space:nowrap">服务</div>
<svg style="left:1873.5px;top:143.5px;width:15px;height:13px;fill:#8a8a8a" viewBox="0 0 16 14"><path d="M0 1h16v2.2H0ZM0 5.9h16v2.2H0ZM0 10.8h16v2.2H0Z"/></svg>
<div class="abs panel" style="left:1236px;top:163px;width:662px;height:808px"></div>
<svg style="left:1259px;top:178px;width:18px;height:18px" viewBox="0 0 18 18"><g fill="none" stroke="#4aa3f0" stroke-width="1.7" stroke-linecap="round"><path d="M7.2 5.2 5.4 3.6A2.6 2.6 0 0 0 1.8 7.2L4.6 10"/><path d="M10.8 12.8 12.6 14.4A2.6 2.6 0 0 0 16.2 10.8L13.4 8"/><path d="M10.5 1V3.6M13.6 2.6 12.2 4.6M15.8 5.5 13.6 6.2M7.5 17V14.4M4.4 15.4 5.8 13.4M2.2 12.5 4.4 11.8" stroke-width="1.2"/></g></svg>
<div class="abs" style="left:1289px;top:176px;font-size:17.5px;line-height:22px;font-weight:bold;color:#d0d0d0;white-space:nowrap">Prefab:</div>
<div class="abs" style="left:1364px;top:178px;font-size:14.8px;line-height:20px;font-weight:bold;color:#d0d0d0;white-space:nowrap">tankBody0</div>
<div class="abs cjk" style="left:1739px;top:176.5px;font-size:15px;line-height:22px;font-weight:bold;color:#c8c8c8;white-space:nowrap">选择</div>
<div class="abs cjk" style="left:1791px;top:176.5px;font-size:15px;line-height:22px;font-weight:bold;color:#c8c8c8;white-space:nowrap">回退</div>
<div class="abs cjk" style="left:1843px;top:176.5px;font-size:15px;line-height:22px;font-weight:bold;color:#c8c8c8;white-space:nowrap">保存</div>
<div class="abs" style="left:1253px;top:205px;width:629px;height:2px;background:#666"></div>
<div class="abs" style="left:1253px;top:222px;width:22px;height:22px;background:#252525;border:1px solid #8a8a8a"></div><svg style="left:1255.5px;top:225.5px;width:17px;height:14px" viewBox="0 0 17 14"><path d="M1.5 7 6 11.3 15.5 1.8" fill="none" stroke="#f08c28" stroke-width="3.6"/></svg>
<div class="abs inp" style="left:1281px;top:217px;width:565px;height:34px"></div>
<div class="abs val" style="left:1291px;top:223.8px">sign</div>
<svg style="left:1866px;top:226px;width:15px;height:14px;fill:#d0d0d0" viewBox="0 0 16 16"><path d="M6 0.5h4v5.5h5.5v4H10v5.5H6V10H0.5V6H6Z"/></svg>
<div class="abs lbl" style="left:1263px;top:261px;font-size:18px">Anchor</div><div class="abs mono" style="left:1472.5px;top:263px">X</div><div class="abs inp" style="left:1497px;top:261px;width:172px;height:28px;border-radius:0 0 5px 5px;border-top:none;"></div><div class="abs val" style="left:1508px;top:261.6px">0.5</div><div class="abs" style="left:1650px;top:261px;width:18px;height:27px;background:#4a4a4a;border-radius:0 4px 4px 0"></div><div class="abs" style="left:1650px;top:271.5px;width:18px;height:1px;background:#303030"></div><svg style="left:1654.7px;top:262.6px;width:8.6px;height:4.4px" viewBox="0 0 9 5" preserveAspectRatio="none"><path d="M0 5H9L4.5 0Z" fill="#1a1a1a"/></svg><svg style="left:1654.7px;top:278.6px;width:8.6px;height:4.4px" viewBox="0 0 9 5" preserveAspectRatio="none"><path d="M0 0H9L4.5 5Z" fill="#1a1a1a"/></svg><div class="abs mono" style="left:1683.5px;top:263px">Y</div><div class="abs inp" style="left:1708px;top:261px;width:173px;height:28px;border-radius:0 0 5px 5px;border-top:none;"></div><div class="abs val" style="left:1719px;top:261.6px">0.5</div><div class="abs" style="left:1862px;top:261px;width:18px;height:27px;background:#4a4a4a;border-radius:0 4px 4px 0"></div><div class="abs" style="left:1862px;top:271.5px;width:18px;height:1px;background:#303030"></div><svg style="left:1866.7px;top:262.6px;width:8.6px;height:4.4px" viewBox="0 0 9 5" preserveAspectRatio="none"><path d="M0 5H9L4.5 0Z" fill="#1a1a1a"/></svg><svg style="left:1866.7px;top:278.6px;width:8.6px;height:4.4px" viewBox="0 0 9 5" preserveAspectRatio="none"><path d="M0 0H9L4.5 5Z" fill="#1a1a1a"/></svg>
<div class="abs lbl" style="left:1263px;top:306px;font-size:18px">Size</div><div class="abs mono" style="left:1472.5px;top:308px">W</div><div class="abs inp" style="left:1497px;top:300px;width:172px;height:34px;border-radius:5px;"></div><div class="abs val" style="left:1508px;top:306.6px">0</div><div class="abs" style="left:1650px;top:301px;width:18px;height:32px;background:#4a4a4a;border-radius:0 4px 4px 0"></div><div class="abs" style="left:1650px;top:316.5px;width:18px;height:1px;background:#303030"></div><svg style="left:1654.7px;top:307.6px;width:8.6px;height:4.4px" viewBox="0 0 9 5" preserveAspectRatio="none"><path d="M0 5H9L4.5 0Z" fill="#1a1a1a"/></svg><svg style="left:1654.7px;top:323.6px;width:8.6px;height:4.4px" viewBox="0 0 9 5" preserveAspectRatio="none"><path d="M0 0H9L4.5 5Z" fill="#1a1a1a"/></svg><div class="abs mono" style="left:1683.5px;top:308px">H</div><div class="abs inp" style="left:1708px;top:300px;width:173px;height:34px;border-radius:5px;"></div><div class="abs val" style="left:1719px;top:306.6px">0</div><div class="abs" style="left:1862px;top:301px;width:18px;height:32px;background:#4a4a4a;border-radius:0 4px 4px 0"></div><div class="abs" style="left:1862px;top:316.5px;width:18px;height:1px;background:#303030"></div><svg style="left:1866.7px;top:307.6px;width:8.6px;height:4.4px" viewBox="0 0 9 5" preserveAspectRatio="none"><path d="M0 5H9L4.5 0Z" fill="#1a1a1a"/></svg><svg style="left:1866.7px;top:323.6px;width:8.6px;height:4.4px" viewBox="0 0 9 5" preserveAspectRatio="none"><path d="M0 0H9L4.5 5Z" fill="#1a1a1a"/></svg>
<div class="abs lbl" style="left:1263px;top:351px;font-size:18px">Color</div><div class="abs" style="left:1474px;top:345px;width:407px;height:35px;background:#fff;border:1px solid #8a8a8a;box-shadow:inset 0 0 0 1px #000"></div><div class="abs" style="left:1476px;top:347px;width:403px;height:24.5px;background:#fff"></div><div class="abs" style="left:1476px;top:371.5px;width:403px;height:2px;background:#000"></div>
<div class="abs lbl" style="left:1263px;top:396px;font-size:18px">Opacity</div><div class="abs inp" style="left:1474px;top:390px;width:407px;height:34px;border-radius:5px;"></div><div class="abs val" style="left:1485px;top:396.6px">255</div><div class="abs" style="left:1862px;top:391px;width:18px;height:32px;background:#4a4a4a;border-radius:0 4px 4px 0"></div><div class="abs" style="left:1862px;top:406.5px;width:18px;height:1px;background:#303030"></div><svg style="left:1866.7px;top:397.6px;width:8.6px;height:4.4px" viewBox="0 0 9 5" preserveAspectRatio="none"><path d="M0 5H9L4.5 0Z" fill="#1a1a1a"/></svg><svg style="left:1866.7px;top:413.6px;width:8.6px;height:4.4px" viewBox="0 0 9 5" preserveAspectRatio="none"><path d="M0 0H9L4.5 5Z" fill="#1a1a1a"/></svg>
<div class="abs lbl" style="left:1263px;top:441px;font-size:18px">Skew</div><div class="abs mono" style="left:1472.5px;top:443px">X</div><div class="abs inp" style="left:1497px;top:435px;width:172px;height:34px;border-radius:5px;"></div><div class="abs val" style="left:1508px;top:441.6px">0</div><div class="abs" style="left:1650px;top:436px;width:18px;height:32px;background:#4a4a4a;border-radius:0 4px 4px 0"></div><div class="abs" style="left:1650px;top:451.5px;width:18px;height:1px;background:#303030"></div><svg style="left:1654.7px;top:442.6px;width:8.6px;height:4.4px" viewBox="0 0 9 5" preserveAspectRatio="none"><path d="M0 5H9L4.5 0Z" fill="#1a1a1a"/></svg><svg style="left:1654.7px;top:458.6px;width:8.6px;height:4.4px" viewBox="0 0 9 5" preserveAspectRatio="none"><path d="M0 0H9L4.5 5Z" fill="#1a1a1a"/></svg><div class="abs mono" style="left:1683.5px;top:443px">Y</div><div class="abs inp" style="left:1708px;top:435px;width:173px;height:34px;border-radius:5px;"></div><div class="abs val" style="left:1719px;top:441.6px">0</div><div class="abs" style="left:1862px;top:436px;width:18px;height:32px;background:#4a4a4a;border-radius:0 4px 4px 0"></div><div class="abs" style="left:1862px;top:451.5px;width:18px;height:1px;background:#303030"></div><svg style="left:1866.7px;top:442.6px;width:8.6px;height:4.4px" viewBox="0 0 9 5" preserveAspectRatio="none"><path d="M0 5H9L4.5 0Z" fill="#1a1a1a"/></svg><svg style="left:1866.7px;top:458.6px;width:8.6px;height:4.4px" viewBox="0 0 9 5" preserveAspectRatio="none"><path d="M0 0H9L4.5 5Z" fill="#1a1a1a"/></svg>
<div class="abs lbl" style="left:1263px;top:486px;font-size:18px">Group</div><div class="abs sel" style="left:1474px;top:480.5px;width:325px;height:35px"></div><div class="abs" style="left:1490px;top:487.0px;font-size:18px;line-height:22px;color:#c8c8c8;white-space:nowrap">default</div><svg style="left:1771px;top:493.0px;width:12px;height:11px;fill:#c8c8c8" viewBox="0 0 12 8" preserveAspectRatio="none"><path d="M0 0H12L6 8Z"/></svg>
<div class="abs cjk" style="left:1804px;top:482px;width:77px;height:31px;background:linear-gradient(#4a8fdc,#3577c6);border:1px solid #16335c;border-radius:3px;box-shadow:inset 0 1px 0 #70aaec;color:#fff;font-size:14.5px;font-weight:bold;line-height:29px;text-align:center">编辑</div>
<svg style="left:1245.5px;top:553px;width:11px;height:11px;fill:#c8c8c8" viewBox="0 0 12 8" preserveAspectRatio="none"><path d="M0 0H12L6 8Z"/></svg>
<div class="abs" style="left:1263.5px;top:548.5px;width:22px;height:22px;background:#252525;border:1px solid #8a8a8a"></div><svg style="left:1266.0px;top:552.0px;width:17px;height:14px" viewBox="0 0 17 14"><path d="M1.5 7 6 11.3 15.5 1.8" fill="none" stroke="#f08c28" stroke-width="3.6"/></svg>
<div class="abs" style="left:1290px;top:548px;font-size:18px;line-height:22px;font-weight:bold;color:#d0d0d0">Graphics</div>
<svg style="left:1858px;top:552.5px;width:14px;height:14px" viewBox="-7 -7 14 14"><g fill="#cfcfcf"><rect x="-1.7" y="-7" width="3.4" height="4" transform="rotate(0)"/><rect x="-1.7" y="-7" width="3.4" height="4" transform="rotate(45)"/><rect x="-1.7" y="-7" width="3.4" height="4" transform="rotate(90)"/><rect x="-1.7" y="-7" width="3.4" height="4" transform="rotate(135)"/><rect x="-1.7" y="-7" width="3.4" height="4" transform="rotate(180)"/><rect x="-1.7" y="-7" width="3.4" height="4" transform="rotate(225)"/><rect x="-1.7" y="-7" width="3.4" height="4" transform="rotate(270)"/><rect x="-1.7" y="-7" width="3.4" height="4" transform="rotate(315)"/><circle r="5.2"/></g><circle r="2.2" fill="#484848"/></svg>
<div class="abs" style="left:1244px;top:576.5px;width:637px;height:2px;background:#666"></div>
<div class="abs lbl" style="left:1263px;top:597px;font-size:18px">Line Width</div><div class="abs inp" style="left:1474px;top:591px;width:407px;height:34px;border-radius:5px;"></div><div class="abs val" style="left:1485px;top:597.6px">1</div><div class="abs" style="left:1862px;top:592px;width:18px;height:32px;background:#4a4a4a;border-radius:0 4px 4px 0"></div><div class="abs" style="left:1862px;top:607.5px;width:18px;height:1px;background:#303030"></div><svg style="left:1866.7px;top:598.6px;width:8.6px;height:4.4px" viewBox="0 0 9 5" preserveAspectRatio="none"><path d="M0 5H9L4.5 0Z" fill="#1a1a1a"/></svg><svg style="left:1866.7px;top:614.6px;width:8.6px;height:4.4px" viewBox="0 0 9 5" preserveAspectRatio="none"><path d="M0 0H9L4.5 5Z" fill="#1a1a1a"/></svg>
<div class="abs lbl" style="left:1263px;top:642px;font-size:18px">Line Join</div><div class="abs sel" style="left:1474px;top:636px;width:407px;height:35px"></div><div class="abs" style="left:1490px;top:642.5px;font-size:18px;line-height:22px;color:#c8c8c8;white-space:nowrap;transform:scaleX(0.9);transform-origin:0 0">MITER</div><svg style="left:1853px;top:648.5px;width:12px;height:11px;fill:#c8c8c8" viewBox="0 0 12 8" preserveAspectRatio="none"><path d="M0 0H12L6 8Z"/></svg>
<div class="abs lbl" style="left:1263px;top:687px;font-size:18px">Line Cap</div><div class="abs sel" style="left:1474px;top:681px;width:407px;height:35px"></div><div class="abs" style="left:1490px;top:687.5px;font-size:18px;line-height:22px;color:#c8c8c8;white-space:nowrap;transform:scaleX(0.9);transform-origin:0 0">BUTT</div><svg style="left:1853px;top:693.5px;width:12px;height:11px;fill:#c8c8c8" viewBox="0 0 12 8" preserveAspectRatio="none"><path d="M0 0H12L6 8Z"/></svg>
<div class="abs lbl" style="left:1263px;top:732px;font-size:18px">Stroke Color</div><div class="abs" style="left:1474px;top:726px;width:407px;height:35px;background:#fff;border:1px solid #8a8a8a;box-shadow:inset 0 0 0 1px #000"></div><div class="abs" style="left:1476px;top:728px;width:403px;height:24.5px;background:#00ff00"></div><div class="abs" style="left:1476px;top:752.5px;width:403px;height:2px;background:#000"></div>
<div class="abs lbl" style="left:1263px;top:777px;font-size:18px">Fill Color</div><div class="abs" style="left:1474px;top:771px;width:407px;height:35px;background:#fff;border:1px solid #8a8a8a;box-shadow:inset 0 0 0 1px #000"></div><div class="abs" style="left:1476px;top:773px;width:403px;height:24.5px;background:#fff"></div><div class="abs" style="left:1476px;top:797.5px;width:403px;height:2px;background:#000"></div>
<div class="abs lbl" style="left:1263px;top:822px;font-size:18px">Miter Limit</div><div class="abs inp" style="left:1474px;top:816.5px;width:407px;height:34px;border-radius:5px;"></div><div class="abs val" style="left:1485px;top:822.6px">10</div><div class="abs" style="left:1862px;top:817.5px;width:18px;height:32px;background:#4a4a4a;border-radius:0 4px 4px 0"></div><div class="abs" style="left:1862px;top:833.0px;width:18px;height:1px;background:#303030"></div><svg style="left:1866.7px;top:824.1px;width:8.6px;height:4.4px" viewBox="0 0 9 5" preserveAspectRatio="none"><path d="M0 5H9L4.5 0Z" fill="#1a1a1a"/></svg><svg style="left:1866.7px;top:840.1px;width:8.6px;height:4.4px" viewBox="0 0 9 5" preserveAspectRatio="none"><path d="M0 0H9L4.5 5Z" fill="#1a1a1a"/></svg>
<div class="abs btn cjk" style="left:1382px;top:886.5px;width:360px;height:38px;font-size:18px;line-height:36px;font-weight:500;color:#d4d4d4">添加组件</div>
<div class="abs" style="left:1887.5px;top:420px;width:4px;height:526px;background:#8c8c8c;border-radius:2px"></div>
<!--/RIGHT-->
<!-- STATUS -->
<svg style="left:16px;top:986.5px;width:18.5px;height:12px" viewBox="0 0 18.5 12"><g fill="#707070"><path d="M3.5 0 7 4.6H4.6V9.4H12.2L10.6 11.6H2.4V4.6H0Z"/><path d="M15 12 11.5 7.4H13.9V2.6H6.3L7.9 0.4H16.1V7.4H18.5Z"/></g></svg>
<svg style="left:54px;top:983px;width:14.6px;height:17.5px" viewBox="0 0 16 18"><g fill="#707070"><ellipse cx="8" cy="3" rx="7.6" ry="2.8"/><path d="M0.4 5.2C2 7.6 14 7.6 15.6 5.2V7.8C14 10.4 2 10.4 0.4 7.8ZM0.4 9.8C2 12.2 14 12.2 15.6 9.8V12.4C14 15 2 15 0.4 12.4ZM0.4 14.4C2 16.8 14 16.8 15.6 14.4V15.6C14 18.6 2 18.6 0.4 15.6Z"/></g></svg>
<svg style="left:88px;top:986.5px;width:17px;height:11.5px" viewBox="0 0 18 12"><path d="M0.8 6C4.5 -0.4 13.5 -0.4 17.2 6 13.5 12.4 4.5 12.4 0.8 6Z" fill="none" stroke="#707070" stroke-width="1.5"/><circle cx="9" cy="5.6" r="3.3" fill="#707070"/></svg>
<div class="abs" style="left:1715px;top:981px;font-size:18px;line-height:22px;color:#fd942b;white-space:nowrap">Cocos Creator v2.0.9</div>

<div id="winborder" class="abs"></div>
</body>
</html>
